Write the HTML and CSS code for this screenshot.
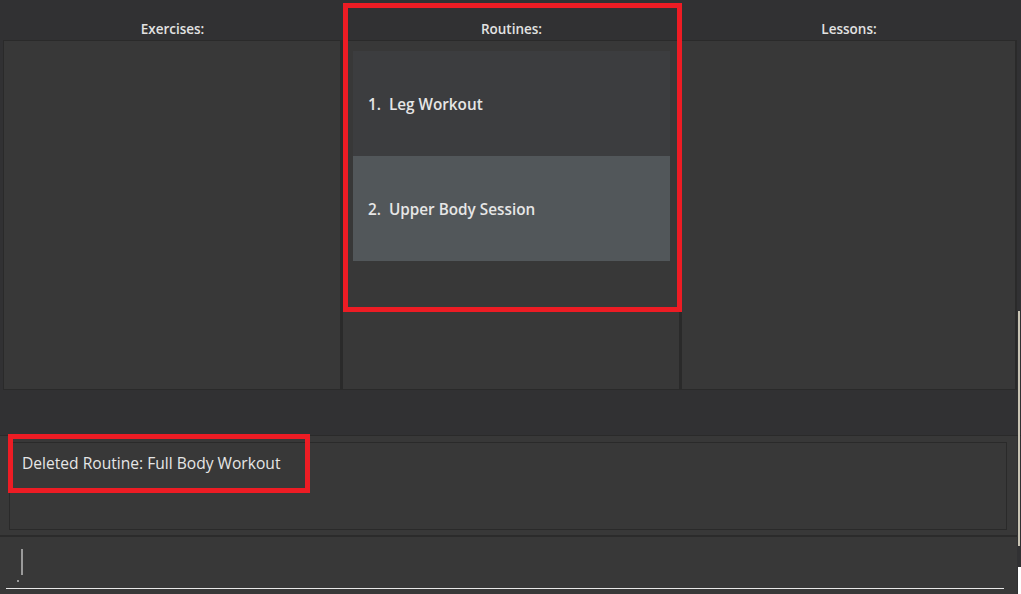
FILE: index.html
```html
<!DOCTYPE html>
<html>
<head>
<meta charset="utf-8">
<link rel="stylesheet" href="styles.css">
</head>
<body>
<div class="app">
  <div class="columns">
    <section class="col">
      <div class="col-title">Exercises:</div>
      <div class="panel"></div>
    </section>
    <section class="col">
      <div class="col-title">Routines:</div>
      <div class="panel list">
        <div class="card">1.&nbsp; Leg Workout</div>
        <div class="card card-selected">2.&nbsp; Upper Body Session</div>
      </div>
    </section>
    <section class="col">
      <div class="col-title">Lessons:</div>
      <div class="panel"></div>
    </section>
  </div>
  <div class="spacer"></div>
  <div class="result">
    <div class="result-box">Deleted Routine: Full Body Workout</div>
  </div>
  <div class="command">
    <div class="caret"></div>
    <div class="dot"></div>
    <div class="underline"></div>
  </div>
  <div class="mark mark-routines"></div>
  <div class="mark mark-result"></div>
  <div class="edge"></div>
  <div class="corner"></div>
</div>
</body>
</html>
```

FILE: styles.css
```css
* { box-sizing: border-box; }
html, body {
  margin: 0;
  padding: 0;
  background: #313133;
  width: 1021px;
  height: 594px;
  overflow: hidden;
  font-family: "Open Sans", "Noto Sans", sans-serif;
}
.app {
  position: relative;
  width: 1021px;
  height: 594px;
  display: flex;
  flex-direction: column;
}
.columns {
  display: grid;
  grid-template-columns: 339px 339px 336px;
  padding-left: 3px;
  height: 390px;
}
.col {
  display: flex;
  flex-direction: column;
}
.col-title {
  height: 40px;
  padding-top: 20px;
  text-align: center;
  color: #e2e2e2;
  font-size: 13.5px;
  font-weight: 600;
  line-height: 18px;
}
.panel {
  flex: 1;
  background: #383838;
  border: 1px solid #2a2a2a;
  border-right-width: 2px;
}
.list {
  padding: 10px 9px 0 10px;
}
.card {
  height: 105px;
  display: flex;
  align-items: center;
  padding-left: 15px;
  background: #3c3d3f;
  color: #e6e6e6;
  font-size: 15.3px;
  font-weight: 600;
}
.card-selected {
  background: #52575a;
}
.spacer {
  height: 46px;
  border-bottom: 1px solid #2a2a2a;
}
.result {
  height: 101px;
  background: #383838;
  padding: 6px 10px 6px 9px;
  border-bottom: 2px solid #2b2b2b;
  width: 1017px;
}
.result-box {
  height: 88px;
  border: 1px solid #2a2a2a;
  padding: 10px 12px;
  color: #e6e6e6;
  font-size: 15.6px;
  line-height: 21px;
}
.command {
  position: relative;
  flex: 1;
  background: #383838;
  width: 1017px;
}
.caret {
  position: absolute;
  left: 21px;
  top: 12px;
  width: 2px;
  height: 26px;
  background: #9a9a9a;
}
.dot {
  position: absolute;
  left: 17px;
  top: 43px;
  width: 2px;
  height: 2px;
  background: #9a9a9a;
}
.underline {
  position: absolute;
  left: 6px;
  right: 13px;
  top: 51px;
  height: 1px;
  background: #e8e8e8;
}
.mark {
  position: absolute;
  border: 5px solid #ed1c24;
}
.mark-routines {
  left: 343px;
  top: 3px;
  width: 339px;
  height: 309px;
}
.mark-result {
  left: 8px;
  top: 434px;
  width: 302px;
  height: 59px;
}
.edge {
  position: absolute;
  left: 1018px;
  top: 311px;
  width: 2px;
  height: 235px;
  background: #c9c4b4;
}
.corner {
  position: absolute;
  left: 1018px;
  top: 567px;
  width: 3px;
  height: 27px;
  background: #ffffff;
}
```
